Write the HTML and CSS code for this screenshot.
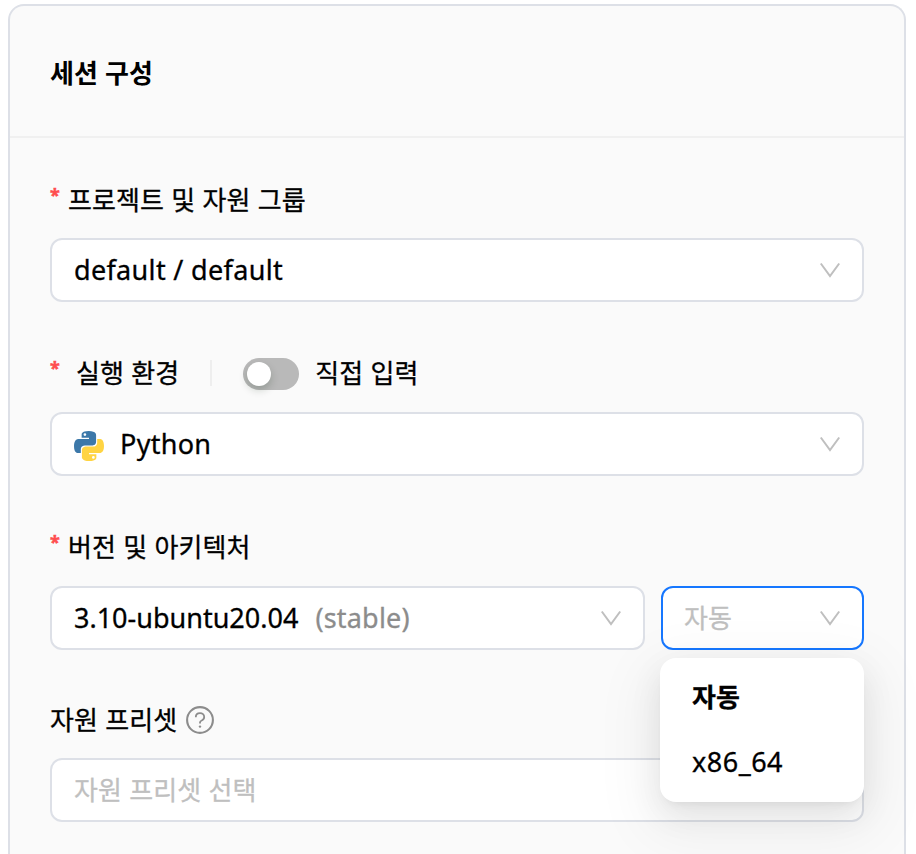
FILE: index.html
```html
<!DOCTYPE html>
<html lang="ko">
<head>
  <meta charset="UTF-8">
  <meta name="viewport" content="width=device-width, initial-scale=1.0">
  <title>세션 구성</title>
  <link rel="stylesheet" href="styles.css">
</head>
<body>

<!-- Shared icons -->
<svg class="sprite" width="0" height="0">
  <symbol id="arrow" viewBox="0 0 24 24">
    <path d="M2.8 5.5 L12 18 L21.2 5.5" fill="none" stroke="currentColor" stroke-width="2"/>
  </symbol>
</svg>

<section class="card">
  <header class="card-header">
    <h1>세션 구성</h1>
  </header>

  <form class="card-body">
    <div class="form-item">
      <div class="label"><span class="required">*</span><span class="text">프로젝트 및 자원 그룹</span></div>
      <div class="select">
        <span class="latin project">default / default</span>
        <svg class="arrow"><use href="#arrow"/></svg>
      </div>
    </div>

    <div class="form-item">
      <div class="label tall">
        <span class="required wide">*</span><span class="text">실행 환경</span>
        <span class="divider"></span>
        <span class="switch"><span class="handle"></span></span>
        <span class="text switch-text">직접 입력</span>
      </div>
      <div class="select">
        <svg class="python" viewBox="0 0 110 110">
          <path fill="#3c78a9" d="M54 0C27 0 28 12 28 12v13h27v4H17S0 27 0 55s15 26 15 26h10V68s-1-15 15-15h26s15 0 15-14V15S83 0 54 0zM40 8a5 5 0 1 1 0 10 5 5 0 0 1 0-10z"/>
          <path fill="#ffd442" d="M56 110c27 0 26-12 26-12V85H55v-4h38s17 2 17-26-15-26-15-26H85v13s1 15-15 15H44s-15 0-15 14v24s-2 15 27 15zm15-8a5 5 0 1 1 0-10 5 5 0 0 1 0 10z"/>
        </svg>
        <span class="latin python-name">Python</span>
        <svg class="arrow"><use href="#arrow"/></svg>
      </div>
    </div>

    <div class="form-item">
      <div class="label tall"><span class="required">*</span><span class="text">버전 및 아키텍처</span></div>
      <div class="row">
        <div class="select version">
          <span class="latin version-name">3.10-ubuntu20.04</span>
          <span class="latin tag">(stable)</span>
          <svg class="arrow"><use href="#arrow"/></svg>
        </div>
        <div class="select arch active">
          <span class="placeholder">자동</span>
          <svg class="arrow"><use href="#arrow"/></svg>
          <div class="dropdown">
            <div class="option selected"><span class="text">자동</span></div>
            <div class="option"><span class="latin x86">x86_64</span></div>
          </div>
        </div>
      </div>
    </div>

    <div class="form-item">
      <div class="label">
        <span class="text">자원 프리셋</span>
        <svg class="help" viewBox="0 0 28 28" fill="none" stroke="currentColor">
          <circle cx="14" cy="14" r="12.9" stroke-width="2.1"/>
          <path d="M9.8 11.2c0-2.4 1.8-4 4.2-4s4.2 1.6 4.2 3.8c0 1.8-1.1 2.9-2.5 3.5-1.2.5-1.7 1.1-1.7 2.1v1" stroke-width="1.8"/>
          <circle cx="14" cy="20.6" r="1.2" fill="currentColor" stroke="none"/>
        </svg>
      </div>
      <div class="select">
        <span class="placeholder">자원 프리셋 선택</span>
      </div>
    </div>
  </form>
</section>

</body>
</html>
```
FILE: styles.css
```css
* {
  box-sizing: border-box;
}

body {
  margin: 0;
  padding: 4px 10px 0 8px;
  height: 854px;
  overflow: hidden;
  background-color: white;
  color: #000;
  font-family: "Noto Sans CJK KR", sans-serif;
  font-size: 26px;
}

.sprite {
  position: absolute;
}

.card {
  height: 850px;
  border: 2px solid #dde0e7;
  border-bottom: none;
  border-radius: 16px 16px 0 0;
  background-color: #fafafa;
}

.card-header {
  display: flex;
  align-items: center;
  height: 132px;
  padding: 1px 40px 0;
  border-bottom: 2px solid #f0f0f0;
}

h1 {
  margin: 0;
  font-size: 26px;
  font-weight: 700;
  line-height: 40px;
}

.card-body {
  padding: 40px 40px 0;
}

.form-item {
  margin-bottom: 48px;
}

.form-item:last-child {
  margin-bottom: 0;
}

.label {
  display: flex;
  align-items: center;
  height: 44px;
  margin-bottom: 16px;
  white-space: nowrap;
}

.label.tall {
  height: 46px;
}

.text,
.placeholder {
  line-height: 40px;
  padding-bottom: 2px;
  letter-spacing: 0.05px;
  -webkit-text-stroke: 0.3px currentColor;
}

.required {
  width: 18px;
  padding-bottom: 10px;
  color: #ff4d4f;
  font-family: "Noto Sans", sans-serif;
  font-size: 18px;
  font-weight: 700;
  line-height: 34px;
  -webkit-text-stroke: 0.5px currentColor;
}

.required.wide {
  width: 26px;
}

.divider {
  width: 2px;
  height: 26px;
  margin: 0 31px;
  background-color: #eee;
}

.switch {
  width: 56px;
  height: 32px;
  margin-top: 2px;
  padding: 4px;
  border-radius: 16px;
  background-color: #b9b9b9;
}

.handle {
  display: block;
  width: 24px;
  height: 24px;
  border-radius: 50%;
  background-color: white;
  box-shadow: 0 4px 8px rgba(0, 35, 11, 0.2);
}

.switch-text {
  margin-left: 16px;
}

.select {
  position: relative;
  display: flex;
  align-items: center;
  height: 64px;
  padding: 0 20px 0 22px;
  border: 2px solid #dde0e7;
  border-radius: 12px;
  background-color: white;
  white-space: nowrap;
}

.select.active {
  padding-left: 21px;
  border-color: #1677ff;
}

.latin {
  padding-bottom: 2px;
  font-family: "Noto Sans", sans-serif;
  font-size: 27px;
  -webkit-text-stroke: 0.3px currentColor;
}

.project {
  letter-spacing: 0.33px;
}

.python-name {
  letter-spacing: 0.3px;
}

.x86 {
  letter-spacing: 0.5px;
}

.arrow {
  width: 24px;
  height: 24px;
  margin-left: auto;
  color: #bfbfbf;
}

.python {
  width: 30px;
  height: 30px;
  margin: 4px 16px 0 0;
}

.row {
  display: flex;
  gap: 16px;
}

.version {
  width: 595px;
}

.arch {
  flex: 1;
}

.tag {
  margin-left: 17px;
  color: #8c8c8c;
  letter-spacing: 0.2px;
}

.placeholder {
  color: #bfbfbf;
}

.help {
  width: 28px;
  height: 28px;
  margin-left: 9px;
  color: #8c8c8c;
}

/* Architecture menu */
.dropdown {
  position: absolute;
  top: 70px;
  left: -3px;
  z-index: 1;
  width: 204px;
  height: 144px;
  padding: 8px;
  border-radius: 16px;
  background-color: white;
  box-shadow: 0 12px 32px rgba(0, 0, 0, 0.08), 0 6px 12px -8px rgba(0, 0, 0, 0.12), 0 18px 56px 16px rgba(0, 0, 0, 0.05);
}

.option {
  display: flex;
  align-items: center;
  height: 64px;
  padding: 0 24px;
}

.option.selected {
  font-weight: 700;
}

.option.selected .text {
  padding-bottom: 4px;
}
```
